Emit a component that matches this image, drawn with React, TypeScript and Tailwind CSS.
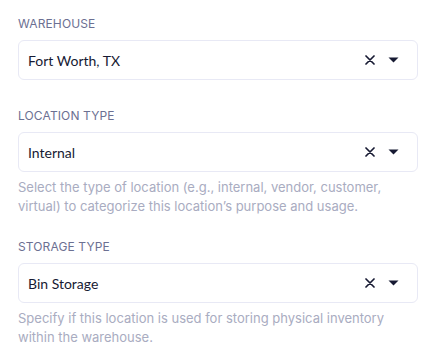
import React from "react"

function Field({ label, value, help }: { label: string; value: string; help?: string }) {
  return (
    <div className="flex flex-col">
      <div className="h-4 pt-px text-[12px] leading-4 uppercase tracking-[0.01em] text-[#6c7092]">{label}</div>
      <div className="mt-[9px] h-10 flex items-center rounded-md border border-[#e8e9f5] bg-white pl-[9px] pr-[18px]">
        <span className="flex-1 font-['Lato',sans-serif] text-[14px] text-[#171a33]">{value}</span>
        <svg width="10" height="10" viewBox="0 0 10 10" className="mr-[13px]">
          <path d="M1 1L9 9M9 1L1 9" stroke="#171a33" strokeWidth="1.7" strokeLinecap="round" />
        </svg>
        <svg width="11" height="6" viewBox="0 0 11 6">
          <path d="M0.5 0.5H10.5L5.5 5.5Z" fill="#171a33" />
        </svg>
      </div>
      {help && (
        <p className="mt-[6px] text-[13px] leading-[19px] text-[#a9acc1] pr-6">{help}</p>
      )}
    </div>
  )
}

export default function App() {
  return (
    <div className="w-[426px] h-[361px] bg-white pl-[18px] pr-[8px] pt-[15px] font-['Inter',sans-serif]">
      <Field label="Warehouse" value="Fort Worth, TX" />
      <div className="mt-[27px]">
        <Field
          label="Location Type"
          value="Internal"
          help="Select the type of location (e.g., internal, vendor, customer, virtual) to categorize this location’s purpose and usage."
        />
      </div>
      <div className="mt-[22px]">
        <Field
          label="Storage Type"
          value="Bin Storage"
          help="Specify if this location is used for storing physical inventory within the warehouse."
        />
      </div>
    </div>
  )
}
